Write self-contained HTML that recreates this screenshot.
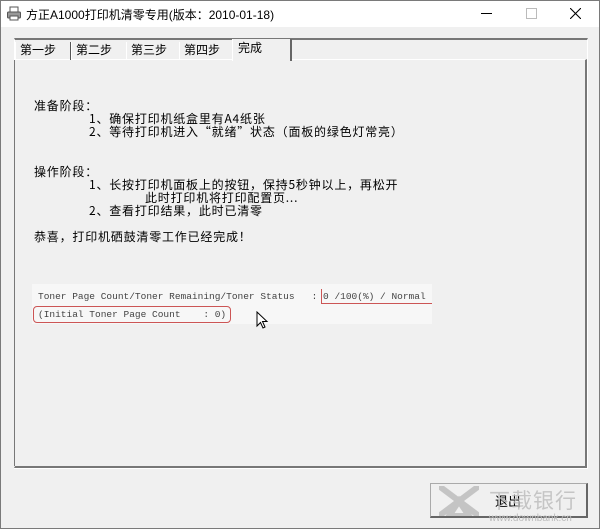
<!DOCTYPE html>
<html><head><meta charset="utf-8"><style>
body{margin:0;width:600px;height:529px;overflow:hidden;background:#f0f0f0;font-family:"Liberation Sans","Noto Sans CJK SC",sans-serif;}
.win{position:absolute;left:0;top:0;width:598px;height:527px;border:1px solid #7a7a7a;background:#f0f0f0;}
.title{position:absolute;left:0;top:0;width:598px;height:26px;background:#fff;}
.title .t{position:absolute;left:25px;top:5px;font-size:12px;color:#000;}
.a{position:absolute}
.cn{position:absolute;font-family:"WenQuanYi Zen Hei","Noto Sans CJK SC",sans-serif;font-size:12px;color:#000;line-height:14px;white-space:nowrap;letter-spacing:0.8px;}
.tab{position:absolute;top:41px;height:18px;font-size:12px;border-right:1px solid #555;border-left:1px solid #fff;padding-left:4px;line-height:17px;font-family:"Liberation Sans","Noto Sans CJK SC",sans-serif}
</style></head><body>
<div class="win">
<div class="title">
<svg class="a" style="left:5px;top:5px" width="16" height="16" viewBox="0 0 16 16"><rect x="4" y="1" width="8" height="5" fill="#fff" stroke="#555"/><rect x="1.5" y="6" width="13" height="6" rx="1" fill="#999" stroke="#555"/><rect x="4" y="10" width="8" height="4" fill="#fff" stroke="#555"/></svg>
<div class="t">方正A1000打印机清零专用(版本：2010-01-18)</div>
<div class="a" style="left:480px;top:12px;width:11px;height:1px;background:#000"></div>
<div class="a" style="left:525px;top:7px;width:9px;height:9px;border:1px solid #bbb"></div>
<svg class="a" style="left:569px;top:7px" width="11" height="11"><path d="M0 0L11 11M11 0L0 11" stroke="#000" stroke-width="1.1"/></svg>
</div>
<div class="a" style="left:13px;top:37px;width:572px;height:428px;border-top:2px solid #777;border-left:1px solid #fff;border-right:1px solid #fff;border-bottom:1px solid #fff"></div>
<div class="a" style="left:13px;top:58px;width:570px;height:406px;border-top:1px solid #fff;border-left:1px solid #fff;border-right:2px solid #777;border-bottom:2px solid #777"></div>
<div class="a" style="left:13px;top:59px;width:1px;height:406px;background:#777"></div>
<div class="tab" style="left:14px;width:50px">第一步</div>
<div class="tab" style="left:70px;width:50px">第二步</div>
<div class="tab" style="left:125px;width:48px">第三步</div>
<div class="tab" style="left:178px;width:48px">第四步</div>
<div class="a" style="left:231px;top:38px;width:52px;height:22px;background:#f0f0f0;border-left:1px solid #fff;border-right:2px solid #666;font-size:12px;padding-left:5px;line-height:18px">完成</div>
<div class="cn" style="left:33px;top:98px">准备阶段：</div>
<div class="cn" style="left:88px;top:111px">1、确保打印机纸盒里有A4纸张</div>
<div class="cn" style="left:88px;top:124px">2、等待打印机进入“就绪”状态（面板的绿色灯常亮）</div>
<div class="cn" style="left:33px;top:164px">操作阶段：</div>
<div class="cn" style="left:88px;top:177px">1、长按打印机面板上的按钮，保持5秒钟以上，再松开</div>
<div class="cn" style="left:144px;top:190px">此时打印机将打印配置页...</div>
<div class="cn" style="left:88px;top:203px">2、查看打印结果，此时已清零</div>
<div class="cn" style="left:33px;top:229px">恭喜，打印机硒鼓清零工作已经完成！</div>
<div class="a" style="left:31px;top:283px;width:400px;height:40px;background:#f7f7f7"></div>
<div class="a" style="left:37px;top:290px;font-family:'Liberation Mono',monospace;font-size:9.5px;color:#444;white-space:pre">Toner Page Count/Toner Remaining/Toner Status   : 0 /100(%) / Normal</div>
<div class="a" style="left:37px;top:308px;font-family:'Liberation Mono',monospace;font-size:9.5px;color:#444;white-space:pre">(Initial Toner Page Count    : 0)</div>
<div class="a" style="left:32px;top:305px;width:196px;height:15px;border:1px solid #c55;border-radius:4px"></div>
<div class="a" style="left:320px;top:288px;width:110px;height:14px;border-left:1px solid #c55;border-bottom:1px solid #c55"></div>
<svg class="a" style="left:255px;top:310px" width="14" height="20"><path d="M1 1L1 15L4.5 11.5L7 17L9 16L6.5 10.5L11 10.5Z" fill="#fff" stroke="#000"/></svg>
<div class="a" style="left:429px;top:482px;width:155px;height:32px;border:1px solid #aaa;border-right:2px solid #666;border-bottom:2px solid #666;background:#f0f0f0"></div>
<div class="a" style="left:494px;top:490px;font-size:13px">退出</div>
<div class="a" style="left:488px;top:484px;font-size:21px;letter-spacing:1px;color:#bbb;opacity:.8">下载银行</div>
<svg class="a" style="left:438px;top:485px;opacity:.5" width="40" height="30"><path d="M0 0L40 30M40 0L0 30M10 30L20 15L30 30Z" stroke="#999" stroke-width="6" fill="none"/></svg>
<div class="a" style="left:488px;top:512px;font-size:10px;color:#bbb">www.downbank.cn</div>
</div>
</body></html>
